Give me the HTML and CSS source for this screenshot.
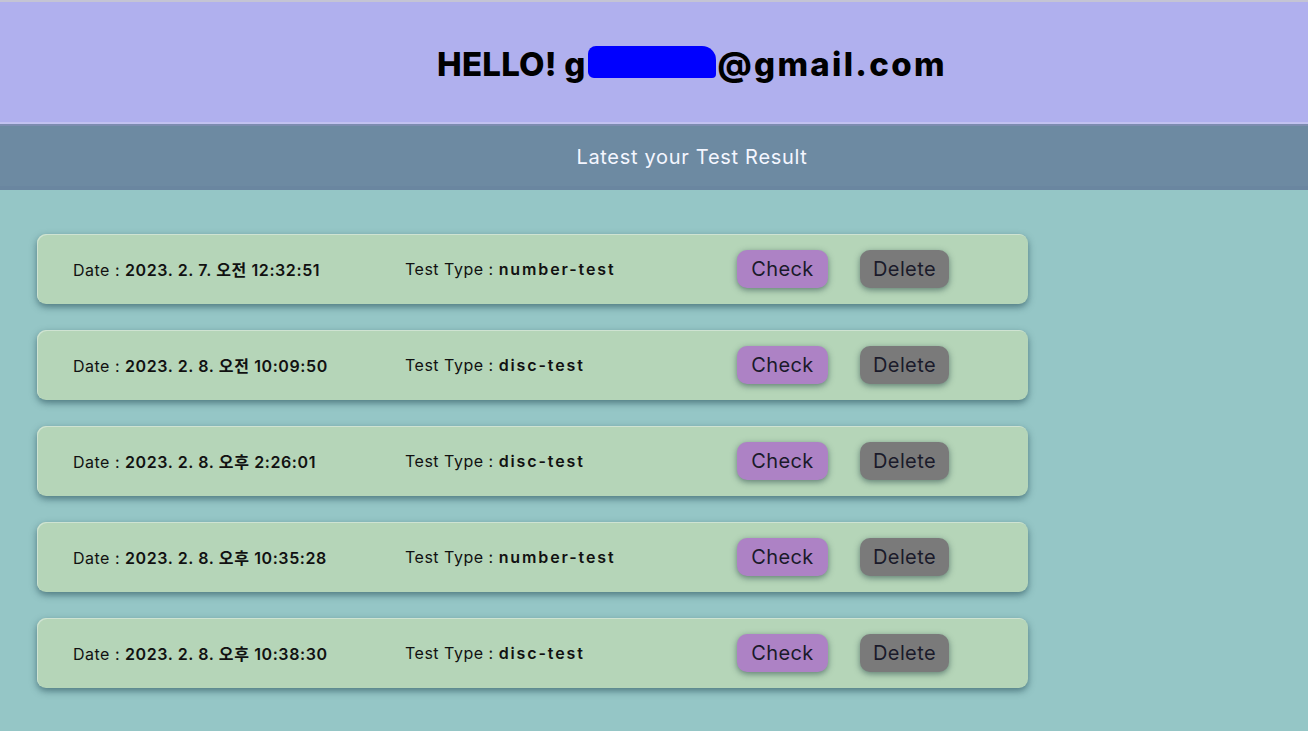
FILE: index.html
```html
<!DOCTYPE html>
<html lang="ko">
<head>
<meta charset="utf-8">
<title>Test Results</title>
<link rel="stylesheet" href="styles.css">
</head>
<body>
<header class="hero">
  <h1 class="hello">HELLO! g<span class="redact"></span><span class="domain">@gmail.com</span></h1>
</header>
<div class="subbar">Latest your Test Result</div>
<main class="list">
  <div class="card">
    <div class="cell">Date : <b>2023. 2. 7. 오전 12:32:51</b></div>
    <div class="cell">Test Type : <b class="t">number-test</b></div>
    <div class="actions"><button class="btn check">Check</button><button class="btn del">Delete</button></div>
  </div>
  <div class="card">
    <div class="cell">Date : <b>2023. 2. 8. 오전 10:09:50</b></div>
    <div class="cell">Test Type : <b class="t">disc-test</b></div>
    <div class="actions"><button class="btn check">Check</button><button class="btn del">Delete</button></div>
  </div>
  <div class="card">
    <div class="cell">Date : <b>2023. 2. 8. 오후 2:26:01</b></div>
    <div class="cell">Test Type : <b class="t">disc-test</b></div>
    <div class="actions"><button class="btn check">Check</button><button class="btn del">Delete</button></div>
  </div>
  <div class="card">
    <div class="cell">Date : <b>2023. 2. 8. 오후 10:35:28</b></div>
    <div class="cell">Test Type : <b class="t">number-test</b></div>
    <div class="actions"><button class="btn check">Check</button><button class="btn del">Delete</button></div>
  </div>
  <div class="card">
    <div class="cell">Date : <b>2023. 2. 8. 오후 10:38:30</b></div>
    <div class="cell">Test Type : <b class="t">disc-test</b></div>
    <div class="actions"><button class="btn check">Check</button><button class="btn del">Delete</button></div>
  </div>
</main>
</body>
</html>
```
FILE: styles.css
```css
* { box-sizing: border-box; }
html, body { margin: 0; padding: 0; }
body {
  background: #95c6c6;
  font-family: "Inter", "Noto Sans CJK KR", sans-serif;
  color: #111;
  min-height: 731px;
}
.hero {
  background: #b0b0ee;
  border-top: 2px solid #c4c4d4;
  border-bottom: 2px solid #c2c2f0;
  height: 124px;
  display: flex;
  align-items: center;
  justify-content: center;
  padding-top: 4px;
}
.hello {
  margin: 0;
  font-size: 33px;
  font-weight: 800;
  color: #000;
  letter-spacing: 0.2px;
  display: flex;
  align-items: center;
  padding-left: 76px;
}
.domain { letter-spacing: 2.3px; }
.redact {
  display: inline-block;
  width: 128px;
  height: 32px;
  background: #0000ff;
  border-radius: 8px 14px 4px 6px;
  margin: -4px 2px 0 2px;
}
.subbar {
  background: #6d8aa2;
  border-top: 2px solid #7d8cb0;
  border-bottom: 4px solid #6a86a0;
  height: 66px;
  display: flex;
  align-items: center;
  justify-content: center;
  color: #f4f6ff;
  font-size: 20px;
  letter-spacing: 0.7px;
  padding: 2px 0 0 76px;
}
.list {
  padding: 44px 0 0 37px;
  display: flex;
  flex-direction: column;
  gap: 26px;
}
.card {
  width: 991px;
  height: 70px;
  background: #b5d5b8;
  border-radius: 9px;
  box-shadow: 0 3px 7px rgba(40, 80, 90, 0.65), inset 1px 1px 0 #cfe3d2;
  display: grid;
  grid-template-columns: 332px 332px 1fr;
  align-items: center;
  padding-left: 36px;
  font-size: 16px;
  letter-spacing: 0.5px;
}
.cell b { font-weight: 600; letter-spacing: 0.6px; }
.cell b.t { letter-spacing: 1.9px; }
.actions {
  display: flex;
  gap: 32px;
  align-items: center;
}
.btn {
  font-family: "Inter", sans-serif;
  font-size: 20px;
  font-weight: 400;
  height: 38px;
  padding: 0 11px;
  border: none;
  border-radius: 10px;
  color: #1a1a2a;
  letter-spacing: 0.4px;
  box-shadow: 0 2px 6px rgba(40, 70, 70, 0.6);
}
.check { background: #ad82c5; width: 91px; }
.del { background: #7a7a7a; width: 89px; }
```
